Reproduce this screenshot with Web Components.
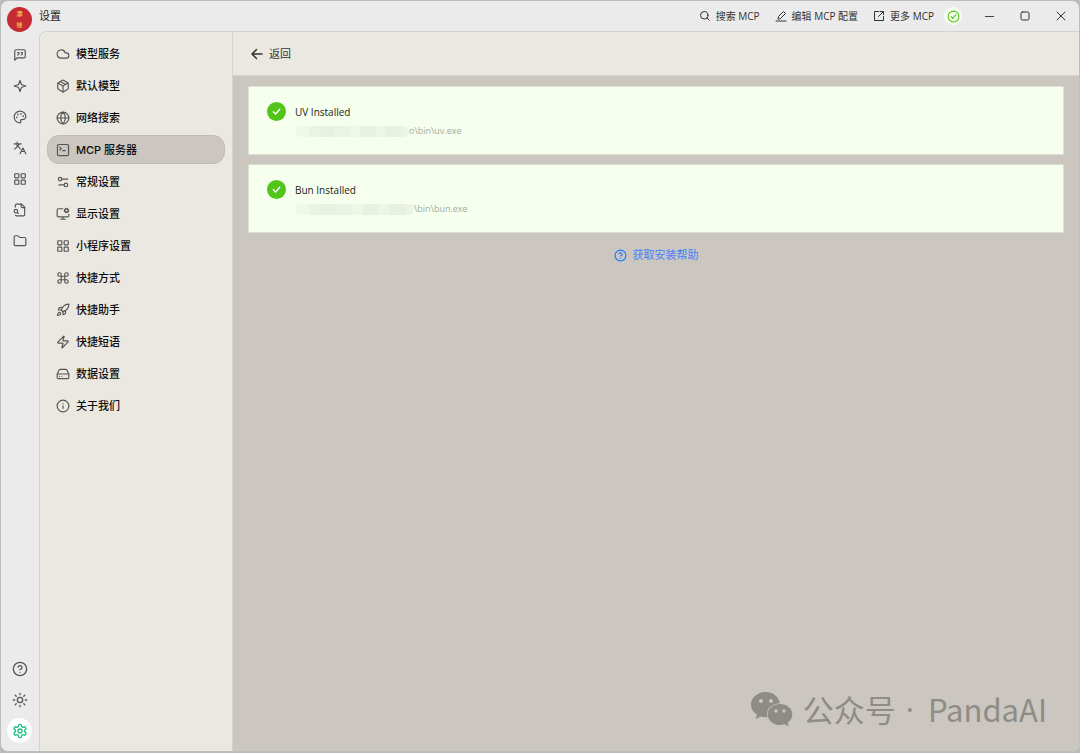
<!DOCTYPE html>
<html lang="zh-CN">
<head>
<meta charset="UTF-8">
<meta name="viewport" content="width=device-width, initial-scale=1.0">
<title>设置</title>
<style>
  :root {
    --bar: #ebebeb;
    --panel: #ebe8e1;
    --canvas: #cbc6bf;
    --line: #d5d2cd;
    --text: #1c1c1c;
    --icon: #555555;
    --green: #52c41a;
  }

  body {
    margin: 0;
    background: #b9bbbe;
    color: var(--text);
    font-family: "Open Sans", "Noto Sans CJK SC", sans-serif;
    font-size: 11px;
    line-height: 16px;
  }
</style>
</head>
<body>
<settings-window></settings-window>

<script>
const ICONS = {
  quote: '<path d="M21 15a2 2 0 0 1-2 2H7l-4 4V5a2 2 0 0 1 2-2h14a2 2 0 0 1 2 2z"/><path d="M8 12a2 2 0 0 0 2-2V8H8"/><path d="M14 12a2 2 0 0 0 2-2V8h-2"/>',
  sparkle: '<path d="M12 2.5 9.9 8.6A2 2 0 0 1 8.6 9.9L2 12l6.6 2.1a2 2 0 0 1 1.3 1.3L12 21.5l2.1-6.1a2 2 0 0 1 1.3-1.3L22 12l-6.6-2.1a2 2 0 0 1-1.3-1.3z"/>',
  palette: '<circle cx="13.5" cy="6.5" r=".5"/><circle cx="17.5" cy="10.5" r=".5"/><circle cx="8.5" cy="7.5" r=".5"/><circle cx="6.5" cy="12.5" r=".5"/><path d="M12 2C6.5 2 2 6.5 2 12s4.500 10 10 10c.926 0 1.648-.746 1.648-1.688 0-.437-.18-.835-.437-1.125-.29-.289-.438-.652-.438-1.125a1.640 1.640 0 0 1 1.668-1.668h1.996c3.051 0 5.555-2.503 5.555-5.554C21.965 6.012 17.461 2 12 2z"/>',
  translate: '<path d="m12.500 13.500-6-6.500M3 14l6-6 2-3M2 5h12M7 2v3"/><path d="m22 22-5-10-5 10M14 18h6"/>',
  grid: '<rect width="7" height="7" x="3" y="3" rx="1"/><rect width="7" height="7" x="14" y="3" rx="1"/><rect width="7" height="7" x="14" y="14" rx="1"/><rect width="7" height="7" x="3" y="14" rx="1"/>',
  fileSearch: '<path d="M14 2v4a2 2 0 0 0 2 2h4"/><path d="M4.268 21A2 2 0 0 0 6 22h12a2 2 0 0 0 2-2V7l-5-5H6a2 2 0 0 0-2 2v3"/><path d="m9 18-1.500-1.500"/><circle cx="5" cy="14" r="3"/>',
  folder: '<path d="M20 20a2 2 0 0 0 2-2V8a2 2 0 0 0-2-2h-7.900a2 2 0 0 1-1.690-.9L9.600 3.900A2 2 0 0 0 7.930 3H4a2 2 0 0 0-2 2v13a2 2 0 0 0 2 2Z"/>',
  help: '<circle cx="12" cy="12" r="10"/><path d="M9.090 9a3 3 0 0 1 5.830 1c0 2-3 3-3 3M12 17h.01"/>',
  sun: '<circle cx="12" cy="12" r="4"/><path d="M12 2v2M12 20v2M4.930 4.930l1.410 1.410M17.660 17.660l1.410 1.410M2 12h2M20 12h2M6.340 17.660l-1.410 1.410M19.070 4.930l-1.410 1.410"/>',
  gear: '<path d="M12.220 2h-.44a2 2 0 0 0-2 2v.18a2 2 0 0 1-1 1.730l-.43.25a2 2 0 0 1-2 0l-.15-.08a2 2 0 0 0-2.730.730l-.22.38a2 2 0 0 0 .730 2.730l.15.1a2 2 0 0 1 1 1.720v.51a2 2 0 0 1-1 1.740l-.15.09a2 2 0 0 0-.730 2.730l.22.38a2 2 0 0 0 2.730.730l.15-.08a2 2 0 0 1 2 0l.43.25a2 2 0 0 1 1 1.730V20a2 2 0 0 0 2 2h.44a2 2 0 0 0 2-2v-.18a2 2 0 0 1 1-1.730l.43-.25a2 2 0 0 1 2 0l.15.08a2 2 0 0 0 2.730-.730l.22-.39a2 2 0 0 0-.730-2.730l-.15-.08a2 2 0 0 1-1-1.740v-.5a2 2 0 0 1 1-1.740l.15-.09a2 2 0 0 0 .730-2.730l-.22-.38a2 2 0 0 0-2.730-.730l-.15.08a2 2 0 0 1-2 0l-.43-.25a2 2 0 0 1-1-1.730V4a2 2 0 0 0-2-2z"/><circle cx="12" cy="12" r="3"/>',
  cloud: '<path d="M17.500 19H9a7 7 0 1 1 6.710-9h1.790a4.500 4.500 0 1 1 0 9Z"/>',
  box: '<path d="M11 21.730a2 2 0 0 0 2 0l7-4A2 2 0 0 0 21 16V8a2 2 0 0 0-1-1.730l-7-4a2 2 0 0 0-2 0l-7 4A2 2 0 0 0 3 8v8a2 2 0 0 0 1 1.730z"/><path d="M12 22V12M3.300 7 12 12l8.700-5M7.500 4.270l9 5.150"/>',
  globe: '<circle cx="12" cy="12" r="10"/><path d="M12 2a14.500 14.500 0 0 0 0 20 14.500 14.500 0 0 0 0-20M2 12h20"/>',
  terminal: '<rect width="19" height="19" x="2.500" y="2.500" rx="2"/><path d="m6.500 12 2.500-2.500L6.500 7M11.500 13h4.500"/>',
  sliders: '<path d="M20 7h-9M14 17H5"/><circle cx="17" cy="17" r="3"/><circle cx="7" cy="7" r="3"/>',
  monitor: '<path d="M12 17v4M8 21h8M22 12.500V15a2 2 0 0 1-2 2H4a2 2 0 0 1-2-2V5a2 2 0 0 1 2-2h7.500"/><circle cx="18" cy="6" r="3"/><path d="m15.200 4.900-.9-.4M15.200 7.100l-.9.4M16.900 3.200l-.3-.9M16.900 8.800l-.3.900M19.100 3.200l.3-.9M19.100 8.800l.3.900M20.800 4.900l.9-.4M20.800 7.100l.9.4"/>',
  command: '<path d="M15 6v12a3 3 0 1 0 3-3H6a3 3 0 1 0 3 3V6a3 3 0 1 0-3 3h12a3 3 0 1 0-3-3"/>',
  rocket: '<path d="M4.500 16.500c-1.500 1.260-2 5-2 5s3.740-.5 5-2c.71-.84.7-2.130-.09-2.910a2.180 2.180 0 0 0-2.910-.09z"/><path d="m12 15-3-3a22 22 0 0 1 2-3.950A12.880 12.880 0 0 1 22 2c0 2.720-.78 7.500-6 11a22.350 22.350 0 0 1-4 2z"/><path d="M9 12H4s.55-3.030 2-4c1.620-1.080 5 0 5 0M12 15v5s3.030-.55 4-2c1.080-1.620 0-5 0-5"/>',
  zap: '<path d="M4 14a1 1 0 0 1-.78-1.630l9.900-10.200a.5.5 0 0 1 .86.46l-1.920 6.020A1 1 0 0 0 13 10h7a1 1 0 0 1 .78 1.630l-9.900 10.200a.5.5 0 0 1-.86-.46l1.920-6.020A1 1 0 0 0 11 14z"/>',
  drive: '<path d="M22 12H2M5.450 5.110 2 12v6a2 2 0 0 0 2 2h16a2 2 0 0 0 2-2v-6l-3.450-6.890A2 2 0 0 0 16.760 4H7.240a2 2 0 0 0-1.790 1.110zM6 16h.01M10 16h.01"/>',
  info: '<circle cx="12" cy="12" r="10"/><path d="M12 16v-4.500M12 8h.01"/>',
  search: '<circle cx="10.500" cy="10.500" r="7.500"/><path d="m20.500 20.500-4.500-4.500"/>',
  edit: '<path d="M6 17.500 7 13 17 3l4 4L11 17zM2 22h20"/>',
  external: '<path d="M11 3H3v18h18v-8M14 3h7v6M20.500 3.500 11 13"/>',
  circleCheck: '<circle cx="12" cy="12" r="10"/><path d="m7.500 12 3 3.500 6-7"/>',
  check: '<path d="m5 12.500 5 5L19 7"/>',
  back: '<path d="m11 3-9 9 9 9M2 12h20"/>',
  minus: '<path d="M3 12h18"/>',
  square: '<rect x="4" y="4" width="16" height="16" rx="3"/>',
  close: '<path d="m4 4 16 16M20 4 4 20"/>'
};

class AppIcon extends HTMLElement {
  connectedCallback() {
    const size = this.getAttribute('size') || 14;
    const stroke = this.getAttribute('stroke') || 2;
    this.attachShadow({ mode: 'open' });
    this.shadowRoot.innerHTML = `
      <style>
        :host {
          display: inline-flex;
          flex: none;
        }
      </style>
      <svg width="${size}" height="${size}" viewBox="0 0 24 24" fill="none" stroke="currentColor"
        stroke-width="${stroke}" stroke-linecap="round" stroke-linejoin="round" aria-hidden="true">
        ${ICONS[this.getAttribute('name')]}
      </svg>
    `;
  }
}

class RailButton extends HTMLElement {
  connectedCallback() {
    this.attachShadow({ mode: 'open' });
    this.shadowRoot.innerHTML = `
      <style>
        :host {
          display: block;
        }

        button {
          display: flex;
          align-items: center;
          justify-content: center;
          width: 25px;
          height: 25px;
          padding: 0;
          border: 0;
          border-radius: 50%;
          background: none;
          color: var(--icon);
          cursor: pointer;
        }

        button:hover {
          background: rgba(0, 0, 0, 0.05);
        }

        :host([active]) button {
          background: #ffffff;
          color: #1fc081;
        }
      </style>
      <button type="button" aria-label="${this.getAttribute('label')}">
        <app-icon name="${this.getAttribute('icon')}" size="${this.getAttribute('size') || 14}"></app-icon>
      </button>
    `;
  }
}

class SideRail extends HTMLElement {
  connectedCallback() {
    this.attachShadow({ mode: 'open' });
    this.shadowRoot.innerHTML = `
      <style>
        :host {
          display: flex;
          flex-direction: column;
          align-items: center;
          justify-content: space-between;
          width: 38px;
          padding: 6px 1px 8px 0;
          box-sizing: border-box;
        }

        nav {
          display: flex;
          flex-direction: column;
          align-items: center;
          gap: 6px;
        }

        .avatar {
          display: flex;
          flex-direction: column;
          align-items: center;
          justify-content: center;
          gap: 4px;
          width: 25px;
          height: 25px;
          margin-bottom: 4px;
          border-radius: 50%;
          background: #c42b33;
          color: #f7c04a;
          font-size: 6px;
          font-weight: 700;
          line-height: 7px;
        }
      </style>
      <nav>
        <div class="avatar"><span>添</span><span>徐</span></div>
        <rail-button icon="quote" label="助手"></rail-button>
        <rail-button icon="sparkle" label="智能体"></rail-button>
        <rail-button icon="palette" label="绘画"></rail-button>
        <rail-button icon="translate" label="翻译"></rail-button>
        <rail-button icon="grid" label="小程序"></rail-button>
        <rail-button icon="fileSearch" label="知识库"></rail-button>
        <rail-button icon="folder" label="文件"></rail-button>
      </nav>
      <nav>
        <rail-button icon="help" size="16" label="帮助"></rail-button>
        <rail-button icon="sun" size="16" label="主题"></rail-button>
        <rail-button icon="gear" size="16" label="设置" active></rail-button>
      </nav>
    `;
  }
}

class TitleBar extends HTMLElement {
  connectedCallback() {
    this.attachShadow({ mode: 'open' });
    this.shadowRoot.innerHTML = `
      <style>
        :host {
          display: flex;
          align-items: center;
          justify-content: space-between;
          height: 30px;
        }

        h1 {
          margin: 0;
          font-size: 11px;
          font-weight: 400;
        }

        .actions,
        .tools,
        .controls {
          display: flex;
          align-items: center;
        }

        .tools {
          gap: 15px;
          margin-right: 10px;
        }

        button {
          display: flex;
          align-items: center;
          justify-content: center;
          padding: 0;
          border: 0;
          background: none;
          color: #333333;
          font: inherit;
          cursor: pointer;
        }

        .tools button {
          gap: 5px;
          font-size: 10px;
        }

        .status {
          width: 18px;
          height: 18px;
          margin-right: 9px;
          border-radius: 50%;
          background: #f6ffed;
          color: var(--green);
        }

        .controls button {
          width: 36px;
          height: 30px;
        }

        .controls button:hover {
          background: rgba(0, 0, 0, 0.06);
        }
      </style>
      <h1><slot></slot></h1>
      <div class="actions">
        <div class="tools">
          <button type="button"><app-icon name="search" size="12"></app-icon>搜索 MCP</button>
          <button type="button"><app-icon name="edit" size="12"></app-icon>编辑 MCP 配置</button>
          <button type="button"><app-icon name="external" size="12"></app-icon>更多 MCP</button>
        </div>
        <button type="button" class="status" aria-label="已安装"><app-icon name="circleCheck" size="13"></app-icon></button>
        <div class="controls">
          <button type="button" aria-label="最小化"><app-icon name="minus" size="11"></app-icon></button>
          <button type="button" aria-label="最大化"><app-icon name="square" size="12"></app-icon></button>
          <button type="button" aria-label="关闭"><app-icon name="close" size="12"></app-icon></button>
        </div>
      </div>
    `;
  }
}

class MenuItem extends HTMLElement {
  connectedCallback() {
    this.attachShadow({ mode: 'open' });
    this.shadowRoot.innerHTML = `
      <style>
        :host {
          display: block;
        }

        a {
          display: flex;
          align-items: center;
          gap: 6px;
          height: 29px;
          padding: 0 8px;
          box-sizing: border-box;
          border: 1px solid transparent;
          border-radius: 12px;
          color: #0d0d0d;
          font-family: Inter, "Noto Sans CJK SC", sans-serif;
          font-weight: 500;
          text-decoration: none;
        }

        app-icon {
          color: var(--icon);
        }

        :host([active]) a {
          background: var(--canvas);
          border-color: #bfbbb5;
        }
      </style>
      <a href="#"><app-icon name="${this.getAttribute('icon')}"></app-icon><slot></slot></a>
    `;
  }
}

class SettingsMenu extends HTMLElement {
  connectedCallback() {
    this.attachShadow({ mode: 'open' });
    this.shadowRoot.innerHTML = `
      <style>
        :host {
          display: block;
          flex: none;
          width: 193px;
          padding: 7px;
          box-sizing: border-box;
          border-right: 1px solid var(--line);
          background: var(--panel);
        }

        nav {
          display: flex;
          flex-direction: column;
          gap: 3px;
        }
      </style>
      <nav>
        <menu-item icon="cloud">模型服务</menu-item>
        <menu-item icon="box">默认模型</menu-item>
        <menu-item icon="globe">网络搜索</menu-item>
        <menu-item icon="terminal" active>MCP 服务器</menu-item>
        <menu-item icon="sliders">常规设置</menu-item>
        <menu-item icon="monitor">显示设置</menu-item>
        <menu-item icon="grid">小程序设置</menu-item>
        <menu-item icon="command">快捷方式</menu-item>
        <menu-item icon="rocket">快捷助手</menu-item>
        <menu-item icon="zap">快捷短语</menu-item>
        <menu-item icon="drive">数据设置</menu-item>
        <menu-item icon="info">关于我们</menu-item>
      </nav>
    `;
  }
}

class InstallCard extends HTMLElement {
  connectedCallback() {
    this.attachShadow({ mode: 'open' });
    this.shadowRoot.innerHTML = `
      <style>
        :host {
          display: flex;
          gap: 9px;
          height: 69px;
          padding: 15px 18px;
          box-sizing: border-box;
          border: 1px solid #dce0d1;
          background: #f6ffed;
        }

        .badge {
          display: flex;
          flex: none;
          align-items: center;
          justify-content: center;
          width: 19px;
          height: 19px;
          border-radius: 50%;
          background: var(--green);
          color: #ffffff;
        }

        h2 {
          margin: 2px 0 3px;
          font-size: 10px;
          font-weight: 400;
          line-height: 16px;
        }

        .path {
          display: flex;
          align-items: center;
          color: #a3aa9d;
          font-size: 9px;
        }

        /* masked part of the install path */
        .mask {
          width: 114px;
          height: 11px;
          border-radius: 5px;
          background: linear-gradient(90deg, #f0f8e8 0 12%, #ebf3e3 12% 22%, #e8f0e1 22% 34%,
            #ebf3e4 34% 48%, #eff7e7 48% 57%, #e9f1e2 57% 71%, #edf5e5 71% 79%, #e8f0e1 79% 93%, #ecf4e5 93%);
        }

        :host([wide]) .mask {
          width: 119px;
        }
      </style>
      <span class="badge"><app-icon name="check" size="11" stroke="3"></app-icon></span>
      <div>
        <h2><slot name="title"></slot></h2>
        <div class="path"><span class="mask"></span><slot></slot></div>
      </div>
    `;
  }
}

class McpInstall extends HTMLElement {
  connectedCallback() {
    this.attachShadow({ mode: 'open' });
    this.shadowRoot.innerHTML = `
      <style>
        :host {
          display: flex;
          flex: 1;
          flex-direction: column;
          min-width: 0;
          background: var(--canvas);
        }

        header {
          display: flex;
          align-items: center;
          height: 43px;
          padding: 0 18px;
          border-bottom: 1px solid var(--line);
          background: var(--panel);
        }

        header button {
          display: flex;
          align-items: center;
          gap: 6px;
          padding: 0;
          border: 0;
          background: none;
          color: #333333;
          font: inherit;
          cursor: pointer;
        }

        main {
          display: flex;
          flex-direction: column;
          gap: 9px;
          padding: 10px 15px;
        }

        main a {
          display: flex;
          align-items: center;
          align-self: center;
          gap: 6px;
          padding: 5px 0;
          color: #4480ff;
          text-decoration: none;
        }

        main app-icon {
          color: #1677ff;
        }

        footer {
          display: flex;
          align-items: center;
          align-self: flex-end;
          gap: 10px;
          margin-top: auto;
          padding: 0 32px 20px;
          color: #8e8c86;
          font-family: "Noto Sans CJK SC", sans-serif;
          font-size: 31px;
          line-height: 44px;
        }

        .dot {
          font-family: "Open Sans", sans-serif;
        }

        .name {
          margin-left: 4px;
        }
      </style>
      <header>
        <button type="button"><app-icon name="back" size="12" stroke="3"></app-icon>返回</button>
      </header>
      <main>
        <install-card><span slot="title">UV Installed</span>o\\bin\\uv.exe</install-card>
        <install-card wide><span slot="title">Bun Installed</span>\\bin\\bun.exe</install-card>
        <a href="#"><app-icon name="help" size="13"></app-icon>获取安装帮助</a>
      </main>
      <footer>
        <svg width="42" height="35" viewBox="0 0 42 35" aria-hidden="true">
          <path fill="#8e8c86" d="M15 0C6.700 0 0 5.700 0 12.800c0 4 2.200 7.500 5.600 9.800L5 27l5-2.600c2 .6 4 .9 6.500.8A11 11 0 0 1 16 22C16 16 21.500 11.300 29 11.200 27.600 4.800 21.800 0 15 0z"/>
          <path fill="#8e8c86" d="M29 12c-6.900 0-12.300 4.700-12.300 10.400S22.100 33 29 33c1.700 0 3.200-.3 4.600-.7L37.500 34.500l-.8-4C39.500 28.500 41.300 25.700 41.300 22.400 41.300 16.700 35.900 12 29 12z"/>
          <g fill="#cbc6bf"><circle cx="10" cy="9" r="2"/><circle cx="20" cy="9" r="2"/><circle cx="25" cy="19" r="1.700"/><circle cx="33" cy="19" r="1.700"/></g>
        </svg>
        <span>公众号</span>
        <span class="dot">·</span>
        <span class="name">PandaAI</span>
      </footer>
    `;
  }
}

class SettingsWindow extends HTMLElement {
  connectedCallback() {
    this.attachShadow({ mode: 'open' });
    this.shadowRoot.innerHTML = `
      <style>
        :host {
          display: grid;
          grid-template-columns: auto 1fr;
          min-height: calc(100vh - 1px);
          box-sizing: border-box;
          border: 1px solid #bdbdbd;
          border-radius: 8px;
          overflow: hidden;
          background: var(--bar);
        }

        .page {
          display: flex;
          flex-direction: column;
          min-width: 0;
        }

        .panes {
          display: flex;
          flex: 1;
          border: 1px solid var(--line);
          border-width: 1px 0 0 1px;
          border-top-left-radius: 8px;
          overflow: hidden;
        }
      </style>
      <side-rail></side-rail>
      <div class="page">
        <title-bar>设置</title-bar>
        <div class="panes">
          <settings-menu></settings-menu>
          <mcp-install></mcp-install>
        </div>
      </div>
    `;
  }
}

customElements.define('app-icon', AppIcon);
customElements.define('rail-button', RailButton);
customElements.define('side-rail', SideRail);
customElements.define('title-bar', TitleBar);
customElements.define('menu-item', MenuItem);
customElements.define('settings-menu', SettingsMenu);
customElements.define('install-card', InstallCard);
customElements.define('mcp-install', McpInstall);
customElements.define('settings-window', SettingsWindow);
</script>
</body>
</html>
